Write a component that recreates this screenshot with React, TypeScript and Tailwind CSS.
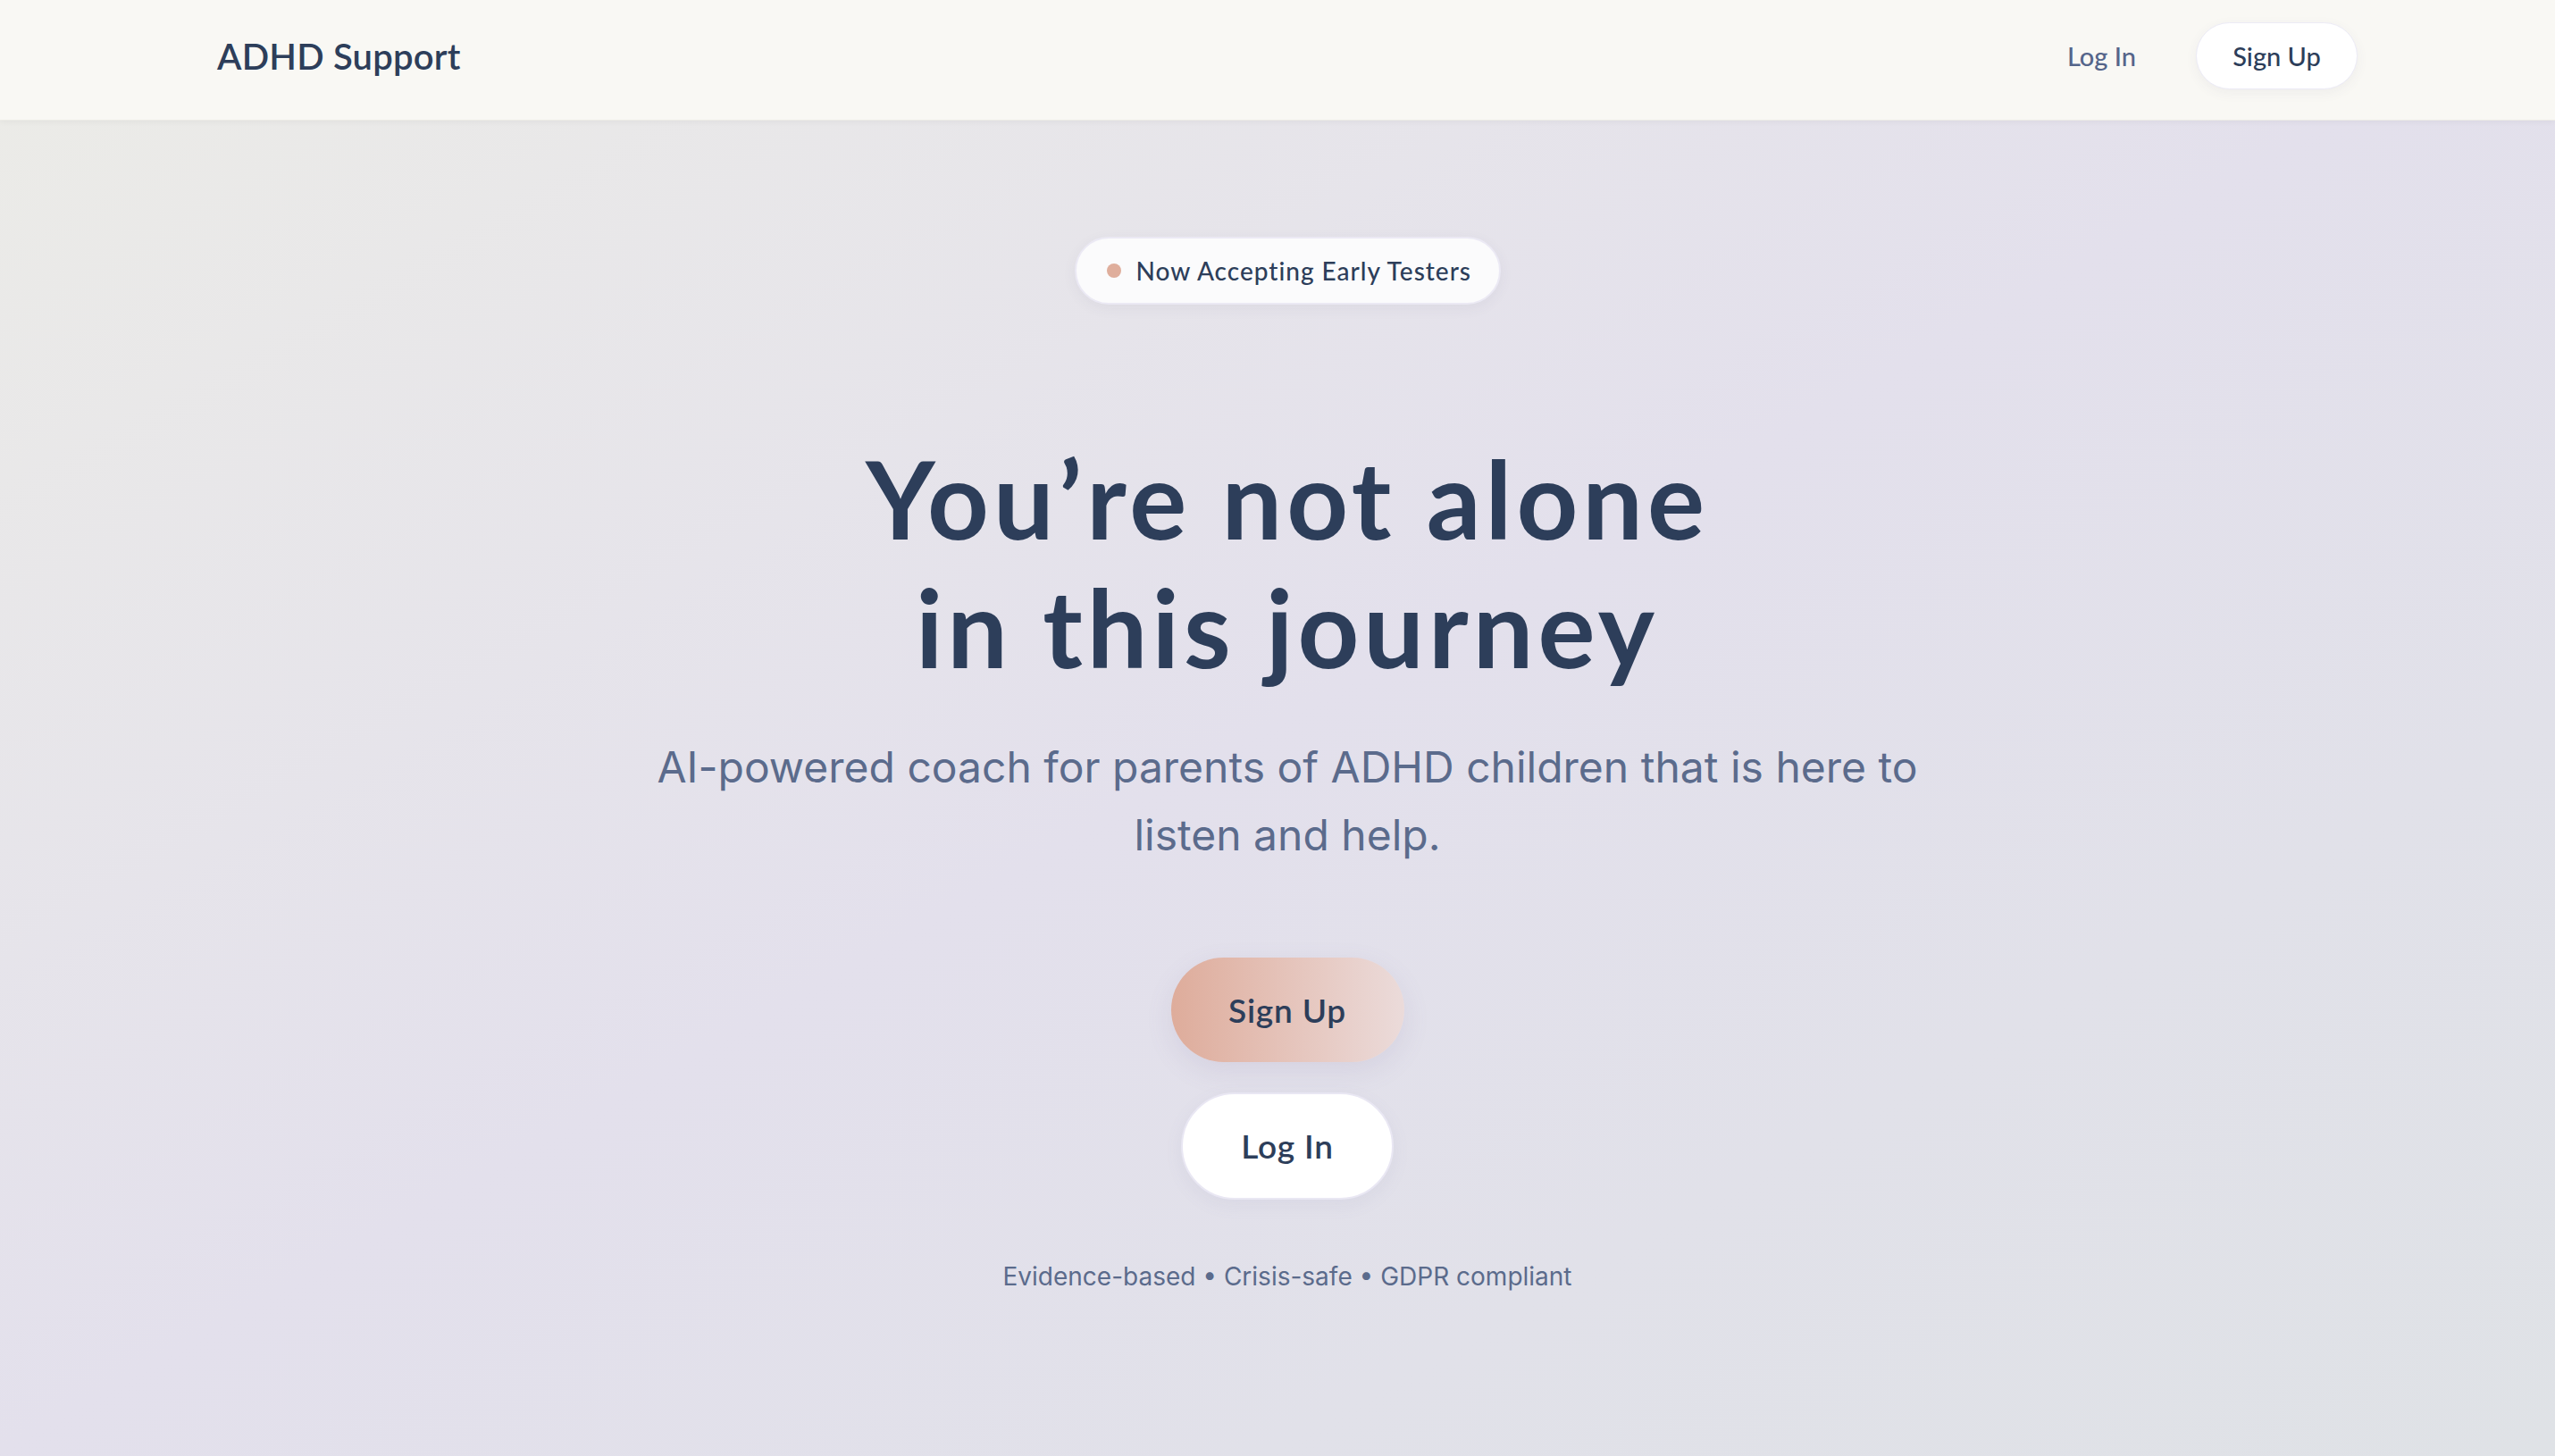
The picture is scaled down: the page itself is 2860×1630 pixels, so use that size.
import { useState } from "react"

const heading = { fontFamily: "Lato, 'Noto Sans', sans-serif" }
const body = { fontFamily: "Inter, 'Noto Sans', sans-serif" }

export default function App() {
  const [clicked, setClicked] = useState("")

  return (
    <div className="min-h-screen w-full bg-gradient-to-br from-[#ecece7] via-[#e3e0ec] to-[#dfe2e6] text-[#2d3e5a]">
      {/* header */}
      <header className="h-[135px] bg-[#f9f8f4] border-b border-[#ecebe6] shadow-[0_2px_6px_rgba(0,0,0,0.04)]">
        <div className="h-full flex items-center justify-between pl-[243px] pr-[221px] pb-[9px]">
          <div className="text-[40px] font-semibold tracking-[0.2px]" style={heading}>
            ADHD Support
          </div>
          <nav className="flex items-center gap-[67px]" style={heading}>
            <button className="text-[29px] font-medium text-[#55658a]" onClick={() => setClicked("login")}>
              Log In
            </button>
            <button
              className="h-[75px] w-[181px] rounded-full bg-white border border-[#ecebf6] shadow-[0_4px_14px_rgba(60,60,100,0.06)] text-[29px] font-medium text-[#2d3e5a]"
              onClick={() => setClicked("signup")}
            >
              Sign Up
            </button>
          </nav>
        </div>
      </header>

      <main className="flex flex-col items-center pt-[130px] pb-20 pl-[22px]">
        <div
          className="h-[76px] w-[477px] flex items-center pl-[34px] pr-[30px] gap-[17px] rounded-full bg-[#fbfbfc] border-2 border-[#ebe9f4] shadow-[0_4px_16px_rgba(60,60,100,0.06)]"
          style={heading}
        >
          <span className="w-[16px] h-[16px] rounded-full bg-[#dfae9c] shrink-0" />
          <span className="text-[28px] font-medium tracking-[1px] whitespace-nowrap">Now Accepting Early Testers</span>
        </div>

        <h1 className="mt-[145px] text-center text-[120px] leading-[1.2] font-bold tracking-[5px]" style={heading}>
          You’re not alone
          <br />
          in this journey
        </h1>

        <p className="mt-[47px] max-w-[1540px] text-center text-[48px] leading-[76px] text-[#5b6b8c]" style={body}>
          AI-powered coach for parents of ADHD children that is here to listen and help.
        </p>

        <div className="mt-[99px] flex flex-col items-center gap-[34px]" style={heading}>
          <button
            className="h-[117px] w-[261px] rounded-full bg-gradient-to-r from-[#deac9b] to-[#ebdbda] text-[37px] font-semibold tracking-[0.8px] shadow-[0_10px_30px_rgba(120,110,160,0.12)]"
            onClick={() => setClicked("signup")}
          >
            Sign Up
          </button>
          <button
            className="h-[120px] w-[238px] rounded-full bg-white border-2 border-[#e9e7f3] text-[37px] font-semibold tracking-[0.8px] shadow-[0_6px_20px_rgba(120,110,160,0.08)]"
            onClick={() => setClicked("login")}
          >
            Log In
          </button>
        </div>

        <p className="mt-[66px] text-[28px] leading-[40px] text-[#5b6b8c]" style={body}>
          Evidence-based • Crisis-safe • GDPR compliant
        </p>
        {clicked && <span className="sr-only">{clicked}</span>}
      </main>
    </div>
  )
}
